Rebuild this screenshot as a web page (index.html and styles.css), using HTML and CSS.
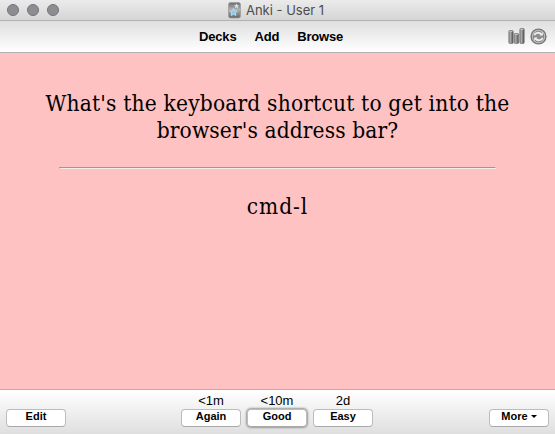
FILE: index.html
```html
<!DOCTYPE html>
<html lang="en">
<head>
<meta charset="utf-8">
<title>Anki - User 1</title>
<link rel="stylesheet" href="styles.css">
</head>
<body>
<header class="titlebar">
  <div class="lights"><i></i><i></i><i></i></div>
  <div class="title">
    <svg class="app-icon" width="13" height="17" viewBox="0 0 13 17">
      <defs><linearGradient id="app" x2="0" y2="1"><stop stop-color="#6e6e6e"/><stop offset=".45" stop-color="#b0b0b0"/><stop offset="1" stop-color="#666"/></linearGradient></defs>
      <rect x=".5" y=".5" width="12" height="15.5" rx="2" fill="url(#app)" stroke="#999" stroke-width=".7"/>
      <path d="M8.500 1.500l.8 1.500 1.700.3-1.200 1.200.2 1.700-1.500-.8-1.500.7.3-1.600L6 3.300l1.700-.2z" fill="#c5e5f5"/>
      <path d="M5.500 6.500l1.200 2.300 2.600.3-1.900 1.800.5 2.600-2.400-1.200-2.400 1.200.5-2.600-1.900-1.800 2.600-.3z" fill="#84cef8" stroke="#c8e6f4" stroke-width=".7"/>
    </svg>
    <span>Anki - User 1</span>
  </div>
</header>
<nav class="toolbar">
  <div class="links"><a>Decks</a><a>Add</a><a>Browse</a></div>
  <div class="tools">
    <svg width="17" height="17" viewBox="0 0 17 17">
      <defs><linearGradient id="bar"><stop stop-color="#888"/><stop offset=".4" stop-color="#aaa"/><stop offset="1" stop-color="#444"/></linearGradient></defs>
      <g fill="url(#bar)" stroke="#777" stroke-width=".7">
        <rect x=".8" y="2.500" width="4.400" height="13" rx="1"/>
        <rect x="6.200" y="5.500" width="4.400" height="10" rx="1"/>
        <rect x="11.800" y=".5" width="4.400" height="15" rx="1"/>
      </g>
      <path d="M1.500 3.500h3M7 6.500h3M12.500 1.500h3" stroke="#ccc" stroke-width=".8"/>
    </svg>
    <svg width="17" height="17" viewBox="0 0 17 17">
      <circle cx="8.500" cy="8.500" r="7.400" fill="#c4c4c4" stroke="#777" stroke-width="1.400"/>
      <circle cx="8.500" cy="8.500" r="5.300" fill="#8c8c8c" stroke="#777" stroke-width=".8"/>
      <path d="M4.300 7.300C5 4.800 9 3.800 11.200 6M12.700 9.700C12 12.200 8 13.200 5.800 11" fill="none" stroke="#eee" stroke-width="1.800"/>
      <path d="M12.800 4v3.500H9.300zM4.200 13v-3.500h3.500z" fill="#f2f2f2"/>
    </svg>
  </div>
</nav>
<main class="card">
  <div class="question"><span class="line first">What's the keyboard shortcut to get into the</span><span class="line second">browser's address bar?</span></div>
  <hr>
  <div class="answer">cmd-l</div>
</main>
<footer class="bottom">
  <button>Edit</button>
  <div class="answers">
    <div class="choice"><span>&lt;1m</span><button>Again</button></div>
    <div class="choice"><span>&lt;10m</span><button class="focused">Good</button></div>
    <div class="choice"><span>2d</span><button>Easy</button></div>
  </div>
  <button class="more">More <i></i></button>
</footer>
</body>
</html>
```
FILE: styles.css
```css
* { box-sizing: border-box; }
body {
  margin: 0;
  height: 434px;
  display: flex;
  flex-direction: column;
  overflow: hidden;
  background: #ffc2c2;
  color: #000;
  font-family: "Liberation Sans", Arial, sans-serif;
}
.titlebar {
  height: 21px;
  flex: none;
  display: grid;
  grid-template-columns: 1fr auto 1fr;
  align-items: center;
  background: linear-gradient(#ebebeb, #d5d5d5);
  border-bottom: 1px solid #b2b2b2;
}
.lights { display: flex; gap: 8px; padding-left: 7px; }
.lights i {
  width: 12px;
  height: 12px;
  border-radius: 50%;
  background: #8e8d91;
  border: 1px solid #747377;
}
.title {
  display: flex;
  align-items: center;
  gap: 5px;
  padding-right: 3px;
  font: 13px/20px Inter, sans-serif;
  color: #4d4d4d;
  white-space: nowrap;
}
.toolbar {
  height: 32px;
  flex: none;
  display: grid;
  grid-template-columns: 199px 1fr auto;
  align-items: center;
  padding-right: 8px;
  background: linear-gradient(#dfdfdf, #fff);
  border-bottom: 1px solid #b2b2b2;
}
.links {
  grid-column: 2;
  display: flex;
  gap: 18px;
  font-size: 13px;
  font-weight: bold;
  line-height: 31px;
  letter-spacing: -.17px;
}
.tools { display: flex; gap: 5px; }
.tools svg { display: block; }
.card {
  flex: 1;
  font: 22.500px/27px "DejaVu Serif Condensed", "DejaVu Serif", serif;
  font-stretch: condensed;
  text-align: center;
  padding: 37px 59px 0;
}
.question { margin: 0 -40px; }
.line { display: block; white-space: nowrap; }
.first { letter-spacing: .18px; }
.second { letter-spacing: .12px; }
.answer { letter-spacing: .9px; }
.card hr {
  height: 2px;
  margin: 23px 0 24px;
  border: 1px solid;
  border-color: #9a9a9a #eee #eee #9a9a9a;
}
.bottom {
  height: 45px;
  flex: none;
  display: flex;
  align-items: flex-end;
  justify-content: space-between;
  padding: 0 6px 7px;
  border-top: 1px solid #b2b2b2;
  background: linear-gradient(#fff, #dfdfdf);
}
button {
  display: block;
  width: 60px;
  height: 18px;
  padding: 0 0 3px;
  border: 1px solid #bcbcbc;
  border-bottom-color: #a9a9a9;
  border-radius: 4px;
  background: #fff;
  color: #000;
  font: bold 11px/13px "Liberation Sans", Arial, sans-serif;
}
.answers { display: flex; gap: 6px; margin-right: 1px; }
.choice {
  display: flex;
  flex-direction: column;
  align-items: center;
  font-size: 13px;
  line-height: 15px;
  gap: 1px;
}
.focused { box-shadow: 0 0 2px 1px #999; }
.more i {
  display: inline-block;
  vertical-align: 2px;
  border: 3px solid transparent;
  border-top-color: #000;
  border-bottom: 0;
}
```
